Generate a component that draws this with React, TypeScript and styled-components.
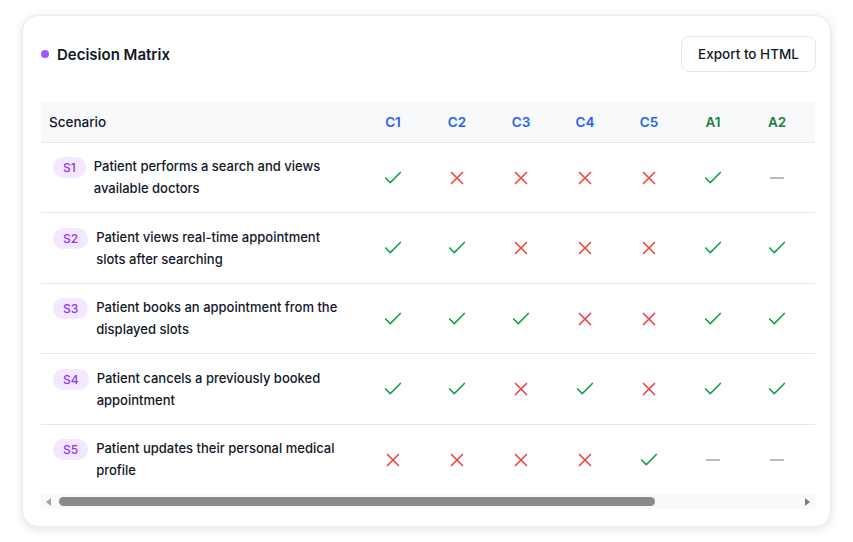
import styled, { createGlobalStyle } from 'styled-components';
import { Check, X, Minus } from 'lucide-react';

type Mark = 'y' | 'n' | '-';

const columns = [
  { key: 'C1', kind: 'c' },
  { key: 'C2', kind: 'c' },
  { key: 'C3', kind: 'c' },
  { key: 'C4', kind: 'c' },
  { key: 'C5', kind: 'c' },
  { key: 'A1', kind: 'a' },
  { key: 'A2', kind: 'a' },
];

const scenarios: { id: string; text: string; marks: Mark[] }[] = [
  {
    id: 'S1',
    text: 'Patient performs a search and views available doctors',
    marks: ['y', 'n', 'n', 'n', 'n', 'y', '-'],
  },
  {
    id: 'S2',
    text: 'Patient views real-time appointment slots after searching',
    marks: ['y', 'y', 'n', 'n', 'n', 'y', 'y'],
  },
  {
    id: 'S3',
    text: 'Patient books an appointment from the displayed slots',
    marks: ['y', 'y', 'y', 'n', 'n', 'y', 'y'],
  },
  {
    id: 'S4',
    text: 'Patient cancels a previously booked appointment',
    marks: ['y', 'y', 'n', 'y', 'n', 'y', 'y'],
  },
  {
    id: 'S5',
    text: 'Patient updates their personal medical profile',
    marks: ['n', 'n', 'n', 'n', 'y', '-', '-'],
  },
];

const GlobalStyle = createGlobalStyle`
  * { box-sizing: border-box; }
  body {
    margin: 0;
    background: #ffffff;
    font-family: Inter, 'Noto Sans', sans-serif;
    color: #111827;
  }
`;

const MarkIcon = ({ mark }: { mark: Mark }) => {
  if (mark === 'y') return <Check size={22} strokeWidth={1.8} color="#16a34a" />;
  if (mark === 'n') return <X size={22} strokeWidth={1.8} color="#ef4444" />;
  return <Minus size={22} strokeWidth={1.8} color="#9ca3af" />;
};

const App = () => {
  return (
    <Page>
      <GlobalStyle />
      <Card>
        <CardHeader>
          <Title>
            <Dot />
            Decision Matrix
          </Title>
          <ExportButton>Export to HTML</ExportButton>
        </CardHeader>

        <TableScroll>
          <Table>
            <colgroup>
              <col style={{ width: 320 }} />
              {columns.map(c => (
                <col key={c.key} style={{ width: 64 }} />
              ))}
              <col />
            </colgroup>
            <thead>
              <tr>
                <HeadCell>Scenario</HeadCell>
                {columns.map(c => (
                  <ColHead key={c.key} $kind={c.kind}>
                    {c.key}
                  </ColHead>
                ))}
                <HeadCell />
              </tr>
            </thead>
            <tbody>
              {scenarios.map(s => (
                <Row key={s.id}>
                  <ScenarioCell>
                    <ScenarioInner>
                      <Badge>{s.id}</Badge>
                      <ScenarioText>{s.text}</ScenarioText>
                    </ScenarioInner>
                  </ScenarioCell>
                  {s.marks.map((m, i) => (
                    <MarkCell key={i}>
                      <MarkIcon mark={m} />
                    </MarkCell>
                  ))}
                  <MarkCell />
                </Row>
              ))}
            </tbody>
          </Table>
        </TableScroll>

        {/* scrollbar drawn by hand, the screenshot hides native ones */}
        <ScrollTrack>
          <ArrowButton>
            <ArrowLeft />
          </ArrowButton>
          <ThumbLane>
            <Thumb />
          </ThumbLane>
          <ArrowButton>
            <ArrowRight />
          </ArrowButton>
        </ScrollTrack>
      </Card>
    </Page>
  );
};

export default App;

const Page = styled.div`
  padding: 15px 22px;
  width: 853px;
`;

const Card = styled.section`
  background: #fff;
  border: 1px solid #ececef;
  border-radius: 16px;
  box-shadow: 0 2px 10px rgba(0, 0, 0, 0.12);
  padding: 20px 14px 17px 18px;
`;

const CardHeader = styled.div`
  display: flex;
  align-items: center;
  justify-content: space-between;
  margin-bottom: 30px;
`;

const Title = styled.h2`
  display: flex;
  align-items: center;
  gap: 8px;
  margin: 0;
  font-size: 15px;
  font-weight: 600;
  color: #111827;
`;

const Dot = styled.span`
  width: 8px;
  height: 8px;
  border-radius: 50%;
  background: #a855f7;
`;

const ExportButton = styled.button`
  width: 135px;
  height: 36px;
  padding: 0;
  background: #fff;
  border: 1px solid #e5e7eb;
  border-radius: 8px;
  font-family: inherit;
  font-size: 13.5px;
  font-weight: 500;
  color: #111827;
`;

const TableScroll = styled.div`
  overflow: hidden;
  width: 774px;
`;

const Table = styled.table`
  border-collapse: collapse;
  table-layout: fixed;
  width: 774px;
`;

const HeadCell = styled.th`
  height: 40px;
  padding: 0 8px;
  background: #f8f9fb;
  border-bottom: 1px solid #e5e7eb;
  text-align: left;
  font-size: 13.5px;
  font-weight: 500;
  color: #111827;
`;

const ColHead = styled(HeadCell)<{ $kind: string }>`
  text-align: center;
  font-weight: 600;
  color: ${p => (p.$kind === 'c' ? '#2563eb' : '#15803d')};
`;

const Row = styled.tr`
  border-bottom: 1px solid #e5e7eb;
  &:last-child {
    border-bottom: none;
  }
`;

const ScenarioCell = styled.td`
  padding: 12.5px 12px 13px;
  vertical-align: top;
`;

const ScenarioInner = styled.div`
  display: flex;
  align-items: flex-start;
  gap: 8px;
`;

const Badge = styled.span`
  flex: none;
  margin-top: 2px;
  height: 21px;
  padding: 0 10px;
  display: flex;
  align-items: center;
  border-radius: 999px;
  background: #f3e8ff;
  color: #9333ea;
  font-size: 12px;
  font-weight: 500;
`;

const ScenarioText = styled.span`
  font-size: 13px;
  font-weight: 500;
  line-height: 22px;
  color: #111827;
`;

const MarkCell = styled.td`
  padding: 0;
  text-align: center;
  vertical-align: middle;
  svg {
    display: inline-block;
    vertical-align: middle;
  }
`;

const ScrollTrack = styled.div`
  display: flex;
  align-items: center;
  width: 774px;
  height: 15px;
  background: #f9f9f9;
`;

const ArrowButton = styled.div`
  flex: none;
  width: 15px;
  height: 15px;
  display: flex;
  align-items: center;
  justify-content: center;
`;

const ArrowLeft = styled.span`
  width: 0;
  height: 0;
  border-top: 4.5px solid transparent;
  border-bottom: 4.5px solid transparent;
  border-right: 5px solid #a3a3a3;
`;

const ArrowRight = styled.span`
  width: 0;
  height: 0;
  border-top: 4.5px solid transparent;
  border-bottom: 4.5px solid transparent;
  border-left: 5px solid #7a7a7a;
`;

const ThumbLane = styled.div`
  flex: 1;
  height: 15px;
  display: flex;
  align-items: center;
  padding-left: 3px;
`;

const Thumb = styled.div`
  width: 596px;
  height: 9px;
  border-radius: 5px;
  background: #8a8a8a;
`;
